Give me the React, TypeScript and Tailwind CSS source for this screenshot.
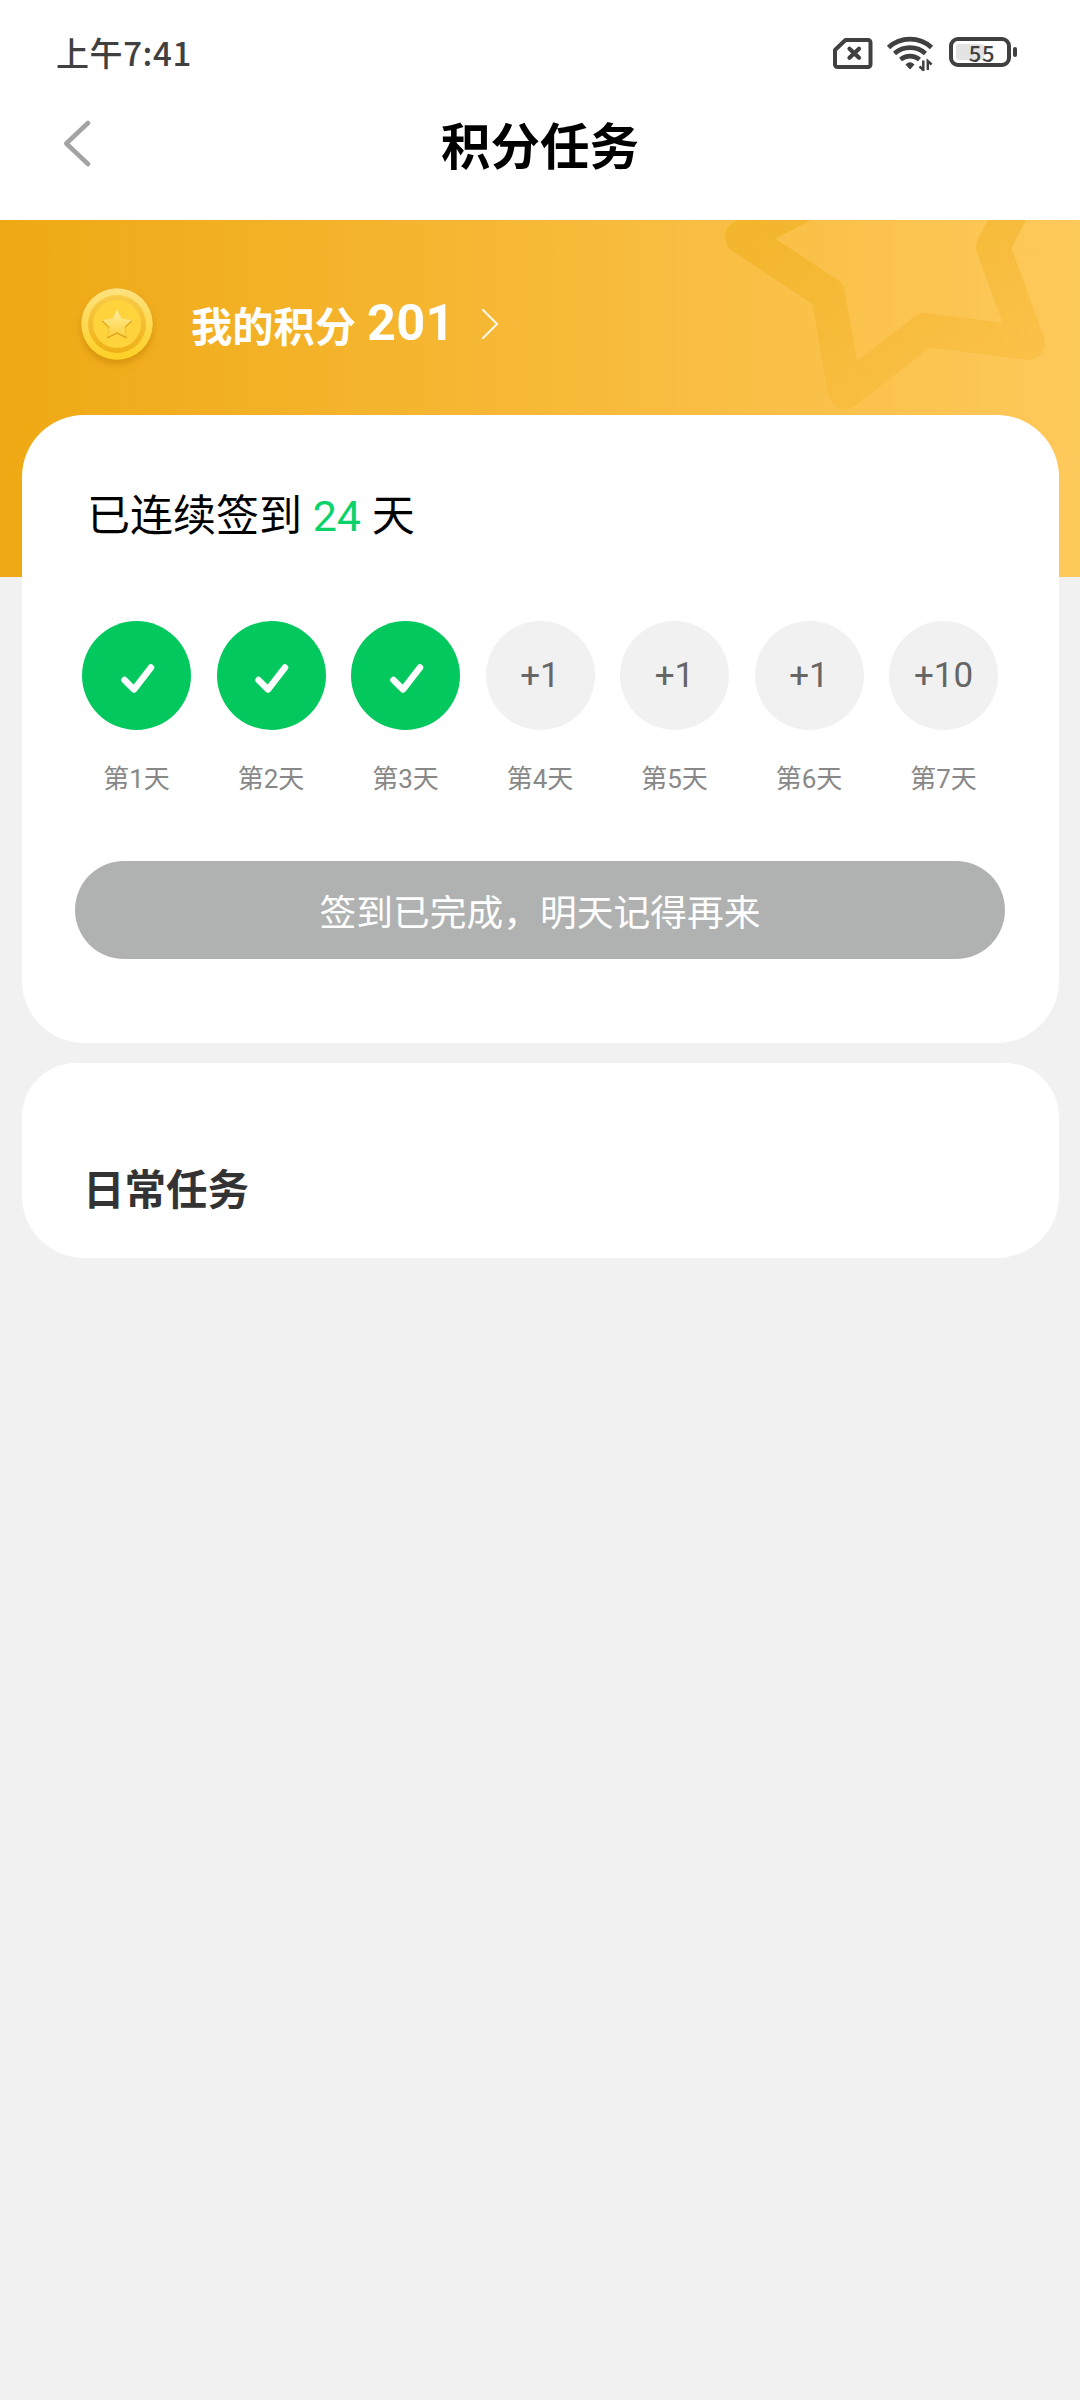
interface Day {
    label: string;
    reward: string;
    done: boolean;
}

const days: Day[] = [
    { label: "第1天", reward: "+1", done: true },
    { label: "第2天", reward: "+1", done: true },
    { label: "第3天", reward: "+1", done: true },
    { label: "第4天", reward: "+1", done: false },
    { label: "第5天", reward: "+1", done: false },
    { label: "第6天", reward: "+1", done: false },
    { label: "第7天", reward: "+10", done: false },
];

function StatusBar() {
    return (
        <div className="flex h-[104px] items-center justify-between pl-14 pr-[63px] text-[#404040]">
            <span className="font-['Noto_Sans_CJK_SC',sans-serif] text-[33px] font-medium leading-[48px] tracking-[0.6px]">
                上午7:41
            </span>
            <div className="flex items-center">
                <svg width="42" height="34" viewBox="0 0 42 34" fill="none" stroke="currentColor">
                    <path d="M13.500 5H36a2.500 2.500 0 0 1 2.500 2.500v22A2.500 2.500 0 0 1 36 32H5.500A2.500 2.500 0 0 1 3 29.500V15z" strokeWidth="4" strokeLinejoin="round" />
                    <path d="m17.500 13.800 9.500 9m0-9-9.500 9" strokeWidth="4.2" strokeLinecap="round" />
                </svg>
                <svg className="ml-3" width="50" height="38" viewBox="0 0 50 38" fill="none" stroke="currentColor">
                    <path d="M2.500 14.500a32 32 0 0 1 43 0" strokeWidth="4.800" />
                    <path d="M8.500 20.500a23.500 23.500 0 0 1 31 0" strokeWidth="4.600" />
                    <path d="M14.500 26.500a15 15 0 0 1 19 0" strokeWidth="4.600" />
                    <path d="M19.500 31.500q4.500-4.500 9 0l-3.500 4q-1 1-2 0z" fill="currentColor" stroke="none" />
                    <path d="M37.300 27.500v9.500l-3.800-3.500M41.800 37v-9l3.800 3.500" strokeWidth="2.500" />
                </svg>
                <div className="ml-[13px] flex items-center">
                    <div className="relative flex h-[30px] w-[62px] items-center justify-center rounded-[9px] border-4 border-current">
                        <div className="absolute left-[3px] top-[3px] h-4 w-7 rounded-[3px] bg-[#e3e3e3]" />
                        <span className="relative pl-1 font-['Noto_Sans_CJK_SC',sans-serif] text-[22px] font-medium leading-none tracking-[0.6px]">
                            55
                        </span>
                    </div>
                    <div className="ml-[2px] h-[10px] w-1 rounded-sm bg-current" />
                </div>
            </div>
        </div>
    );
}

function NavBar() {
    return (
        <div className="grid h-[116px] grid-cols-[1fr_auto_1fr] items-start">
            <svg className="ml-[60px] mt-[15px]" width="34" height="48" viewBox="0 0 34 48" fill="none" stroke="#a3a3a3" strokeWidth="4.500" strokeLinecap="round" strokeLinejoin="round">
                <path d="M28 4 6.300 24.500 28 45" />
            </svg>
            <h1 className="mt-2 text-[49.5px] font-bold leading-[72px] text-black">积分任务</h1>
        </div>
    );
}

function Coin() {
    return (
        <svg width="92" height="96" viewBox="0 0 92 96">
            <defs>
                <linearGradient id="rim" x1="0" y1="0" x2="0" y2="1">
                    <stop offset="0" stopColor="#fee280" />
                    <stop offset="1" stopColor="#fed024" />
                </linearGradient>
                <linearGradient id="groove" x1="0" y1="0" x2="0" y2="1">
                    <stop offset="0" stopColor="#f9cb48" />
                    <stop offset="1" stopColor="#efb016" />
                </linearGradient>
                <linearGradient id="coinStar" x1="0" y1="0" x2="0" y2="1">
                    <stop offset="0" stopColor="#fff0a0" />
                    <stop offset="1" stopColor="#fdcf3c" />
                </linearGradient>
                <filter id="coinShadow" x="-30%" y="-30%" width="160%" height="160%">
                    <feDropShadow dx="0" dy="4" stdDeviation="3.5" floodColor="#b87400" floodOpacity="0.5" />
                </filter>
            </defs>
            <circle cx="46" cy="46" r="35.700" fill="url(#rim)" filter="url(#coinShadow)" />
            <circle cx="46" cy="46" r="29" fill="url(#groove)" />
            <circle cx="46" cy="46" r="24" fill="#fed33c" />
            <path
                d="m46 32.500 4.800 9 10 1.500-7.200 7 1.800 10-9.400-4.800-9.400 4.800 1.800-10-7.200-7 10-1.500z"
                fill="#dda21a"
                stroke="#dda21a"
                strokeLinejoin="round"
            />
            <path
                d="m46 31.500 4.800 9 10 1.500-7.200 7 1.800 10-9.400-4.800-9.400 4.800 1.800-10-7.200-7 10-1.500z"
                fill="url(#coinStar)"
            />
        </svg>
    );
}

function Banner() {
    return (
        <div className="relative h-[357px] overflow-hidden bg-linear-[90deg,#efa914,#fec95b]">
            <svg className="absolute right-0 top-0" width="400" height="240" viewBox="0 0 400 240" fill="none">
                <defs>
                    <linearGradient id="bigStar" gradientUnits="userSpaceOnUse" x1="0" y1="0" x2="60" y2="200">
                        <stop offset="0" stopColor="#efae1a" stopOpacity="0.6" />
                        <stop offset="1" stopColor="#efae1a" stopOpacity="0.26" />
                    </linearGradient>
                </defs>
                <path
                    d="M359-63 313 27l35 96-103-13-80 62-17-98-86-57L158-33 250-90z"
                    stroke="url(#bigStar)"
                    strokeWidth="34"
                    strokeLinejoin="round"
                />
            </svg>
            <div className="relative flex items-center pl-[71px] pt-[58px] text-white">
                <Coin />
                <div className="ml-7 flex items-baseline font-bold leading-[60px]">
                    <span className="text-[41.25px]">我的积分</span>
                    <span className="ml-[11px] -translate-y-[2px] text-[50.500px] tracking-[0.3px]">201</span>
                </div>
                <svg className="mb-[5px] ml-[23px]" width="24" height="34" viewBox="0 0 24 34" fill="none" stroke="white" strokeOpacity="0.85" strokeWidth="2.200" strokeLinecap="round">
                    <path d="m5 3 14 14L5 31" />
                </svg>
            </div>
        </div>
    );
}

function DayItem({ label, reward, done }: Day) {
    return (
        <div className="flex w-[109px] flex-col items-center">
            {done ? (
                <div className="flex size-[109px] items-center justify-center rounded-full bg-[#02c85e]">
                    <svg width="40" height="36" viewBox="0 0 40 36" fill="none" stroke="white" strokeWidth="6.500" strokeLinecap="round" strokeLinejoin="round">
                        <path d="m7.500 22 9.500 9.500 17-22" />
                    </svg>
                </div>
            ) : (
                <div className="flex size-[109px] items-center justify-center rounded-full bg-[#f1f1f1] pt-[2px] text-[35px] text-[#666]">
                    {reward}
                </div>
            )}
            <span className="mt-[29px] text-[26px] leading-10 text-[#888]">{label}</span>
        </div>
    );
}

function CheckInCard() {
    return (
        <section className="relative ml-[22px] mr-[21px] -mt-[162px] h-[628px] rounded-[62px] bg-white pl-[53px] pr-[54px]">
            <p className="pl-3 pt-[69px] text-[43px] leading-[64px] text-black">
                已连续签到 <span className="text-[#0bd36a]">24</span> 天
            </p>
            <div className="mt-[73px] flex justify-between px-[7px]">
                {days.map((day) => (
                    <DayItem key={day.label} {...day} />
                ))}
            </div>
            <button className="mt-[62px] flex h-[98px] w-full items-center justify-center rounded-full bg-[#b0b2b1] pt-[7px] text-[36.75px] text-white">
                签到已完成，明天记得再来
            </button>
        </section>
    );
}

export default function App() {
    return (
        <div className="h-[2400px] w-[1080px] overflow-hidden bg-[#f1f1f1] font-[Roboto,'Noto_Sans_CJK_SC',sans-serif]">
            <header className="h-[220px] bg-white">
                <StatusBar />
                <NavBar />
            </header>
            <Banner />
            <CheckInCard />
            <section className="ml-[22px] mr-[21px] mt-5 h-[195px] rounded-t-[54px] rounded-b-[62px] bg-white pl-[61px] pt-[98px]">
                <h2 className="text-[41.500px] font-bold leading-[60px] text-[#333]">日常任务</h2>
            </section>
        </div>
    );
}
